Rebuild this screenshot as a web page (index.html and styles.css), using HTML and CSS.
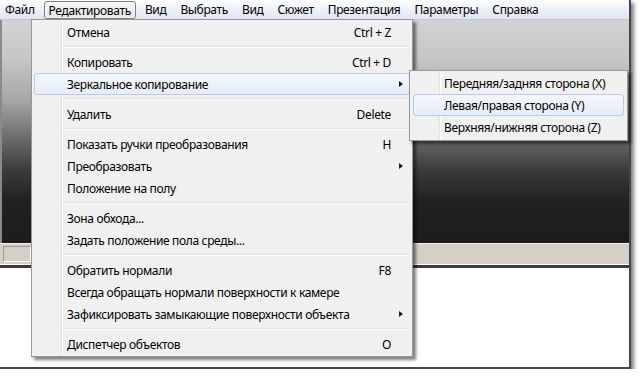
FILE: index.html
```html
<!DOCTYPE html>
<html lang="ru">
<head>
<meta charset="utf-8">
<title>Редактировать</title>
<link rel="stylesheet" href="styles.css">
</head>
<body>
<div class="window">
  <div class="menubar">
    <span class="mb-item first">Файл</span>
    <span class="mb-item active">Редактировать</span>
    <span class="mb-item">Вид</span>
    <span class="mb-item">Выбрать</span>
    <span class="mb-item">Вид</span>
    <span class="mb-item">Сюжет</span>
    <span class="mb-item">Презентация</span>
    <span class="mb-item">Параметры</span>
    <span class="mb-item">Справка</span>
  </div>
  <div class="viewport"></div>
  <div class="statusbar"><div class="panel"></div></div>
  <div class="content"></div>

  <div class="dropdown">
    <div class="item"><span class="label">Отмена</span><span class="key">Ctrl + Z</span></div>
    <div class="sep"></div>
    <div class="item"><span class="label">Копировать</span><span class="key">Ctrl + D</span></div>
    <div class="item hot sub"><span class="label">Зеркальное копирование</span><span class="arrow"></span></div>
    <div class="sep"></div>
    <div class="item"><span class="label">Удалить</span><span class="key">Delete</span></div>
    <div class="sep"></div>
    <div class="item"><span class="label">Показать ручки преобразования</span><span class="key">H</span></div>
    <div class="item sub"><span class="label">Преобразовать</span><span class="arrow"></span></div>
    <div class="item"><span class="label">Положение на полу</span></div>
    <div class="sep"></div>
    <div class="item"><span class="label">Зона обхода...</span></div>
    <div class="item"><span class="label">Задать положение пола среды...</span></div>
    <div class="sep"></div>
    <div class="item"><span class="label">Обратить нормали</span><span class="key">F8</span></div>
    <div class="item"><span class="label">Всегда обращать нормали поверхности к камере</span></div>
    <div class="item sub"><span class="label">Зафиксировать замыкающие поверхности объекта</span><span class="arrow"></span></div>
    <div class="sep"></div>
    <div class="item"><span class="label">Диспетчер объектов</span><span class="key">O</span></div>
  </div>

  <div class="submenu">
    <div class="item"><span class="label">Передняя/задняя сторона (X)</span></div>
    <div class="item hot"><span class="label">Левая/правая сторона (Y)</span></div>
    <div class="item"><span class="label">Верхняя/нижняя сторона (Z)</span></div>
  </div>
</div>
</body>
</html>
```

FILE: styles.css
```css
* { box-sizing: border-box; }

html, body {
  margin: 0;
  padding: 0;
  background: #ffffff;
  font-family: "Noto Sans", "Liberation Sans", sans-serif;
  font-size: 12px;
  letter-spacing: -0.35px;
  color: #000;
}

.window {
  position: relative;
  width: 631px;
  height: 369px;
  border-right: 2px solid #474747;
  border-bottom: 2px solid #474747;
  box-shadow: 3px 3px 4px rgba(0, 0, 0, 0.5);
  display: flex;
  flex-direction: column;
  background: #fff;
}

.menubar {
  height: 20px;
  flex: none;
  display: flex;
  align-items: flex-start;
  background: linear-gradient(to bottom, #fdfdfe 0%, #eef2f8 45%, #dfe6f1 100%);
  border-bottom: 1px solid #c3c9d6;
}

.mb-item {
  height: 18px;
  margin-top: 1px;
  line-height: 17px;
  padding: 0 7px;
  white-space: nowrap;
}

.mb-item.first { padding-left: 5px; }

.mb-item.active {
  padding: 0 4px;
  margin-left: 2px;
  margin-right: 2px;
  border: 1px solid #7c7c7c;
  border-radius: 3px;
  background: linear-gradient(to bottom, #f6f6f6, #e4e6ea);
  box-shadow: inset 0 0 0 1px rgba(255, 255, 255, 0.7);
}

.viewport {
  height: 223px;
  flex: none;
  border-left: 2px solid #8a8a8a;
  background: linear-gradient(to bottom,
    #d3d3d3 0%,
    #c5c5c5 18%,
    #a6a6a6 36%,
    #686868 54%,
    #3c3c3c 67%,
    #212121 81%,
    #1c1c1c 100%);
}

.statusbar {
  height: 25px;
  flex: none;
  background: #d4d0c8;
  border-top: 1px solid #f2f1ee;
  border-bottom: 3px solid #3c3c3c;
  box-shadow: inset 0 -1px 0 #ffffff;
  padding: 2px 0 0 3px;
}

.panel {
  width: 28px;
  height: 16px;
  border: 1px solid;
  border-color: #9d9a92 #ffffff #ffffff #9d9a92;
}

.content {
  flex: 1;
  background: #ffffff;
}

/* Drop-down menu */
.dropdown,
.submenu {
  position: absolute;
  background-color: #f0f0f0;
  border: 1px solid #979797;
  box-shadow: 3px 3px 3px rgba(0, 0, 0, 0.5);
  background-image: linear-gradient(to right,
    transparent 29px, #e2e3e3 29px, #e2e3e3 30px,
    #ffffff 30px, #ffffff 31px, transparent 31px);
  background-clip: padding-box;
}

.dropdown {
  left: 31px;
  top: 19px;
  width: 382px;
  padding: 1px 2px;
}

.submenu {
  left: 409px;
  top: 70px;
  width: 219px;
  padding: 1px 3px 2px 3px;
}

.item {
  position: relative;
  height: 22px;
  display: flex;
  align-items: center;
  padding: 0 18px 0 32px;
  white-space: nowrap;
  border: 1px solid transparent;
  border-radius: 3px;
}

.submenu .item { padding-left: 30px; }

.item .label { flex: 1; }

.item .key { text-align: right; }

.item.hot {
  border-color: #b4cdee;
  background: linear-gradient(to bottom, #f3f7fc, #e6edf8);
}

.arrow {
  position: absolute;
  right: 6px;
  top: 7px;
  width: 0;
  height: 0;
  border-left: 4px solid #1a1a1a;
  border-top: 3.5px solid transparent;
  border-bottom: 3.5px solid transparent;
}

.sep {
  height: 8px;
  margin-left: 29px;
  position: relative;
}

.sep::before {
  content: "";
  position: absolute;
  left: 0;
  right: 0;
  top: 3px;
  height: 1px;
  background: #e0e0e0;
  box-shadow: 0 1px 0 #ffffff;
}
```
